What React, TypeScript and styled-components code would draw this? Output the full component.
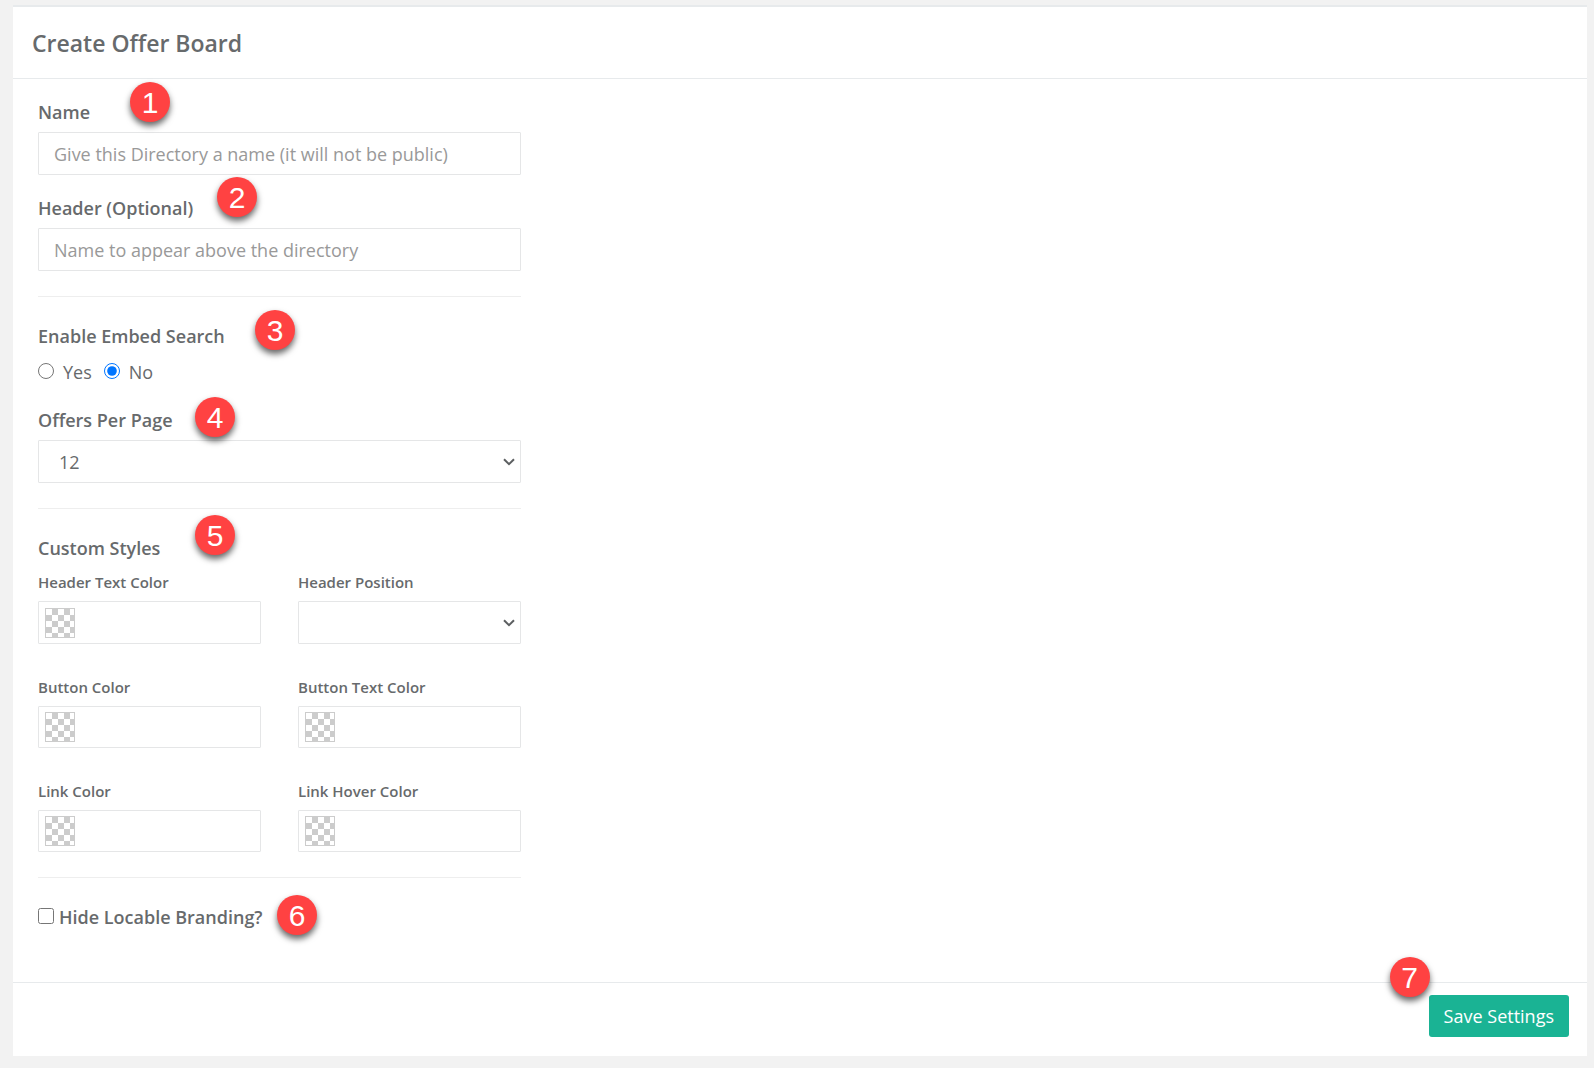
import React, { useState } from 'react';
import styled, { createGlobalStyle } from 'styled-components';

const GlobalStyle = createGlobalStyle`
  *, *::before, *::after { box-sizing: border-box; }
  body {
    margin: 0;
    background: #f2f2f2;
    color: #676a6c;
    font-family: 'Open Sans', 'Noto Sans', sans-serif;
    font-size: 18px;
    line-height: 24px;
  }
  input, select, button { font: inherit; color: inherit; }
`;

const Page = styled.main`
  padding: 5px 7px 12px 13px;
`;

const Panel = styled.form`
  background: #fff;
  border-top: 2px solid #e7eaec;
`;

const PanelHeader = styled.header`
  padding: 20px 19px 19px;
  border-bottom: 1px solid #e7eaec;
`;

const Title = styled.h1`
  margin: 0;
  font-size: 23px;
  line-height: 32px;
  font-weight: 600;
`;

const PanelBody = styled.div`
  padding: 21px 25px 53px;
`;

const Column = styled.div`
  width: 100%;
  max-width: 483px;
`;

const Field = styled.div`
  display: flex;
  flex-direction: column;
  gap: 8px;
  & + & { margin-top: 21px; }
`;

const Heading = styled.div`
  position: relative;
  font-weight: 600;
  width: fit-content;
`;

const Group = styled.fieldset`
  margin: 0;
  padding: 0;
  border: 0;
  min-width: 0;
`;

const Legend = styled.legend`
  position: relative;
  padding: 0;
  font-weight: 600;
`;

const TextInput = styled.input`
  width: 100%;
  height: 43px;
  padding: 0 15px;
  border: 1px solid #e5e6e7;
  border-radius: 1px;
  background: #fff;
  &::placeholder { color: #999; opacity: 1; }
`;

const SelectWrap = styled.div`
  position: relative;
  display: flex;
`;

const Select = styled.select`
  appearance: none;
  width: 100%;
  height: 43px;
  padding: 0 32px 0 20px;
  border: 1px solid #e5e6e7;
  border-radius: 1px;
  background: #fff;
`;

const Chevron = styled.svg`
  position: absolute;
  right: 6px;
  top: 18px;
  pointer-events: none;
`;

const Divider = styled.hr`
  margin: 25px 0 27px;
  border: 0;
  border-top: 1px solid #eee;
`;

const RadioRow = styled.div`
  display: flex;
  gap: 12px;
  margin: 12px 0 24px;
`;

const RadioLabel = styled.label`
  display: flex;
  gap: 9px;
`;

const Tick = styled.input`
  width: 16px;
  height: 16px;
  margin: 3px 0 0;
  accent-color: #0075ff;
`;

const CheckRow = styled.div`
  display: flex;
  gap: 5px;
`;

const StyleGrid = styled.div`
  display: grid;
  grid-template-columns: repeat(2, minmax(0, 1fr));
  gap: 32px 37px;
  margin-top: 11px;
`;

const StyleField = styled.div`
  display: flex;
  flex-direction: column;
  gap: 8px;
`;

const SmallLabel = styled.label`
  font-size: 15px;
  line-height: 22px;
  font-weight: 600;
`;

const ColorBox = styled.div`
  display: flex;
  align-items: center;
  flex: 1;
  min-height: 42px;
  padding: 0 6px;
  border: 1px solid #e5e6e7;
  border-radius: 1px;
`;

const Swatch = styled.button`
  flex: none;
  width: 30px;
  height: 30px;
  padding: 0;
  border: 1px solid #ccc;
  background: conic-gradient(#ccc 25%, #fff 0 50%, #ccc 0 75%, #fff 0) 0 0 / 12px 12px;
`;

const ColorInput = styled.input`
  flex: 1;
  min-width: 0;
  padding: 0 12px;
  border: 0;
  outline: 0;
  background: transparent;
`;

const PanelFooter = styled.footer`
  display: flex;
  justify-content: flex-end;
  padding: 12px 18px 19px;
  border-top: 1px solid #e7eaec;
`;

const SaveWrap = styled.div`
  position: relative;
`;

const SaveButton = styled.button`
  height: 42px;
  padding: 0 15px;
  border: 0;
  border-radius: 3px;
  background: #1ab394;
  color: #fff;
`;

const Badge = styled.span<{ $left: number; $top: number }>`
  position: absolute;
  z-index: 1;
  left: ${(p) => p.$left}px;
  top: ${(p) => p.$top}px;
  width: 40px;
  height: 40px;
  border-radius: 50%;
  background: #ff4242;
  box-shadow: 0 4px 6px rgba(0, 0, 0, 0.6);
  color: #fff;
  font: 400 30px/42px 'Liberation Sans', Arial, sans-serif;
  text-align: center;
`;

const Arrow = () => (
  <Chevron width="12" height="8" viewBox="0 0 12 8" fill="none" stroke="#5c5f61" strokeWidth="2" aria-hidden="true">
    <path d="M1 1.2 6 6.2 11 1.2" />
  </Chevron>
);

function ColorField({ id, label }: { id: string; label: string }) {
  const [value, setValue] = useState('');
  return (
    <StyleField>
      <SmallLabel htmlFor={id}>{label}</SmallLabel>
      <ColorBox>
        <Swatch type="button" aria-label={`Pick ${label}`} />
        <ColorInput id={id} type="text" value={value} onChange={(e) => setValue(e.target.value)} />
      </ColorBox>
    </StyleField>
  );
}

export default function App() {
  return (
    <>
      <GlobalStyle />
      <Page>
        <Panel onSubmit={(e: React.FormEvent) => e.preventDefault()}>
          <PanelHeader>
            <Title>Create Offer Board</Title>
          </PanelHeader>
          <PanelBody>
            <Column>
              <Field>
                <Heading>
                  <label htmlFor="name">Name</label>
                  <Badge $left={92} $top={-18}>1</Badge>
                </Heading>
                <TextInput id="name" type="text" placeholder="Give this Directory a name (it will not be public)" />
              </Field>
              <Field>
                <Heading>
                  <label htmlFor="header">Header (Optional)</label>
                  <Badge $left={179} $top={-19}>2</Badge>
                </Heading>
                <TextInput id="header" type="text" placeholder="Name to appear above the directory" />
              </Field>
              <Divider />
              <Group>
                <Legend>
                  Enable Embed Search
                  <Badge $left={217} $top={-14}>3</Badge>
                </Legend>
                <RadioRow>
                  <RadioLabel>
                    <Tick type="radio" name="search" value="yes" />
                    Yes
                  </RadioLabel>
                  <RadioLabel>
                    <Tick type="radio" name="search" value="no" defaultChecked />
                    No
                  </RadioLabel>
                </RadioRow>
              </Group>
              <Field>
                <Heading>
                  <label htmlFor="per-page">Offers Per Page</label>
                  <Badge $left={157} $top={-11}>4</Badge>
                </Heading>
                <SelectWrap>
                  <Select id="per-page" defaultValue="12">
                    <option>12</option>
                    <option>24</option>
                    <option>48</option>
                  </Select>
                  <Arrow />
                </SelectWrap>
              </Field>
              <Divider />
              <Group>
                <Legend>
                  Custom Styles
                  <Badge $left={157} $top={-21}>5</Badge>
                </Legend>
                <StyleGrid>
                  <ColorField id="header-text" label="Header Text Color" />
                  <StyleField>
                    <SmallLabel htmlFor="position">Header Position</SmallLabel>
                    <SelectWrap>
                      <Select id="position" defaultValue="">
                        <option value="" />
                        <option>Left</option>
                        <option>Center</option>
                        <option>Right</option>
                      </Select>
                      <Arrow />
                    </SelectWrap>
                  </StyleField>
                  <ColorField id="button" label="Button Color" />
                  <ColorField id="button-text" label="Button Text Color" />
                  <ColorField id="link" label="Link Color" />
                  <ColorField id="link-hover" label="Link Hover Color" />
                </StyleGrid>
              </Group>
              <Divider />
              <CheckRow>
                <Tick id="branding" type="checkbox" />
                <Heading>
                  <label htmlFor="branding">Hide Locable Branding?</label>
                  <Badge $left={218} $top={-10}>6</Badge>
                </Heading>
              </CheckRow>
            </Column>
          </PanelBody>
          <PanelFooter>
            <SaveWrap>
              <SaveButton type="submit">Save Settings</SaveButton>
              <Badge $left={-39} $top={-38}>7</Badge>
            </SaveWrap>
          </PanelFooter>
        </Panel>
      </Page>
    </>
  );
}
